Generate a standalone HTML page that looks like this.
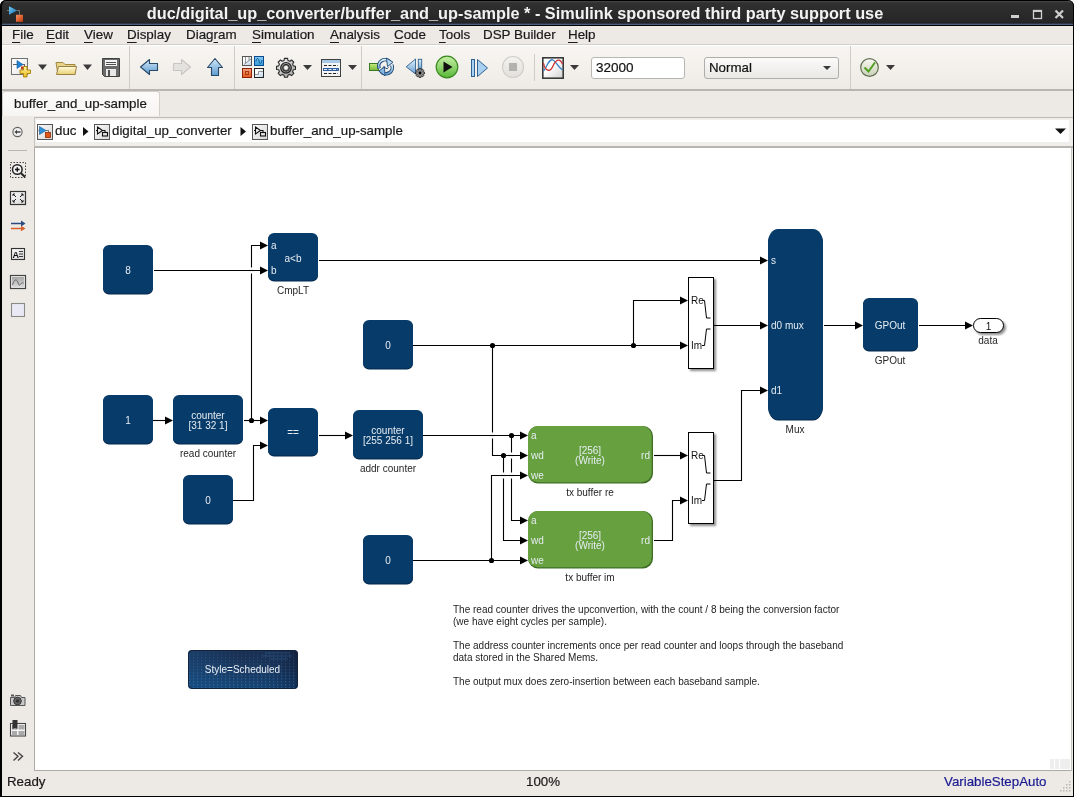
<!DOCTYPE html>
<html><head><meta charset="utf-8">
<style>
*{margin:0;padding:0;box-sizing:border-box}
html,body{width:1074px;height:797px;overflow:hidden;background:#fff;will-change:transform;font-family:"Liberation Sans",sans-serif;}
.abs{position:absolute}
#menubar span,#tab span,#status span,.ui{-webkit-text-stroke:0.2px currentColor}
#title{left:0;top:0;width:1074px;height:26px;background:linear-gradient(#000 0,#000 1px,#4a4a4a 1px,#3a3a3a 2px,#303030 3px,#262626 22px,#222 23px,#2c3644 23px,#2c3644 24px,#4a6080 24px,#4a6080 25px,#000 25px,#000 26px);border-radius:6px 6px 0 0;box-shadow:inset 2px 0 #000,inset -1px 0 #000;}
#title .t{position:absolute;left:-22px;top:4px;width:1074px;text-align:center;color:#f2f2f2;font-weight:bold;font-size:16.3px;line-height:18px;white-space:nowrap}
#menubar{left:2px;top:26px;width:1071px;height:18px;background:#edeae5;}
#menubar u{text-decoration:underline;text-underline-offset:3px;text-decoration-thickness:1px}
#menubar span{position:absolute;top:0px;font-size:13.4px;line-height:18px;color:#1a1a1a;white-space:nowrap}
#toolbar{left:2px;top:44px;width:1071px;height:47px;background:linear-gradient(#f8f6f2,#eeebe6);border-top:1px solid #d3cfc9;border-bottom:2px solid #b8b5b0;box-shadow:inset 0 1px #fff}
#tabrow{left:2px;top:91px;width:1071px;height:26px;background:#edeae5;border-bottom:1px solid #bcb9b4}
#tab{left:2px;top:91px;width:158px;height:26px;background:linear-gradient(#fcfbfa,#f7f5f2);border:1px solid #d3d0ca;border-bottom:none;border-radius:3px 3px 0 0}
#tab span{position:absolute;left:11px;top:4px;font-size:13.3px;line-height:16px;color:#1a1a1a;white-space:nowrap}
#crumbrow{left:2px;top:116px;width:1071px;height:32px;background:#edeae5}
#crumb{left:34px;top:117px;width:1039px;height:31px;background:#f0eeea;border-top:1px solid #bdbab5;border-bottom:2px solid #b8b5b0;border-left:1px solid #c6c3be}
#crumbin{left:36px;top:120px;width:1033px;height:22px;background:#fff}
#palette{left:2px;top:148px;width:32px;height:622px;background:#edeae5}
#canvas{left:34px;top:148px;width:1038px;height:623px;background:#fff;border-left:1px solid #aeaba6;border-bottom:1px solid #aeaba6;border-right:1px solid #c8c5c0}
#status{left:2px;top:771px;width:1071px;height:25px;background:#edeae5}
#status span{position:absolute;font-size:13.3px;line-height:16px;white-space:nowrap}
</style></head><body>
<div class="abs" style="left:0;top:20px;width:1074px;height:777px;background:#000"></div>
<div class="abs" style="left:2px;top:26px;width:1071px;height:770px;background:#edebe6"></div>
<div id="title" class="abs"><div class="t">duc/digital_up_converter/buffer_and_up-sample * - Simulink sponsored third party support use</div></div>
<div id="menubar" class="abs">
<span style="left:10px"><u>F</u>ile</span>
<span style="left:44px"><u>E</u>dit</span>
<span style="left:82px"><u>V</u>iew</span>
<span style="left:125px"><u>D</u>isplay</span>
<span style="left:184px">Diag<u>r</u>am</span>
<span style="left:250px"><u>S</u>imulation</span>
<span style="left:328px"><u>A</u>nalysis</span>
<span style="left:392px"><u>C</u>ode</span>
<span style="left:437px"><u>T</u>ools</span>
<span style="left:481px">DSP Builder</span>
<span style="left:566px"><u>H</u>elp</span>
</div>
<div id="toolbar" class="abs"></div>
<div id="tabrow" class="abs"></div>
<div id="tab" class="abs"><span>buffer_and_up-sample</span></div>
<div id="crumbrow" class="abs"></div>
<div id="crumb" class="abs"></div><div id="crumbin" class="abs"></div>
<div id="palette" class="abs"></div>
<div id="canvas" class="abs"></div>
<div id="status" class="abs">
<span style="left:5px;top:3px;color:#1a1a1a">Ready</span>
<span style="left:524px;top:3px;color:#1a1a1a">100%</span>
<span style="left:942px;top:3px;color:#1a1a90">VariableStepAuto</span>
</div>
<!--TOOLBAR-->
<svg class="abs" style="left:0;top:0" width="1074" height="150" viewBox="0 0 1074 150">
<defs>
<linearGradient id="gBlueArr" x1="0" y1="0" x2="0" y2="1"><stop offset="0" stop-color="#d4e8f8"/><stop offset="1" stop-color="#5c9bd0"/></linearGradient>
<linearGradient id="gFold" x1="0" y1="0" x2="0" y2="1"><stop offset="0" stop-color="#fffbe0"/><stop offset="1" stop-color="#e8d070"/></linearGradient>
<linearGradient id="gPlus" x1="0" y1="0" x2="0" y2="1"><stop offset="0" stop-color="#fff3a0"/><stop offset="1" stop-color="#e8b820"/></linearGradient>
<linearGradient id="gPlay" x1="0" y1="0" x2="0" y2="1"><stop offset="0" stop-color="#c8f0a8"/><stop offset="1" stop-color="#58b838"/></linearGradient>
<linearGradient id="gStop" x1="0" y1="0" x2="0" y2="1"><stop offset="0" stop-color="#f4f2ef"/><stop offset="1" stop-color="#e2e0dc"/></linearGradient>
<linearGradient id="gField" x1="0" y1="0" x2="0" y2="1"><stop offset="0" stop-color="#fbfbfa"/><stop offset="1" stop-color="#e9e8e5"/></linearGradient>
<linearGradient id="gCheck" x1="0" y1="0" x2="0" y2="1"><stop offset="0" stop-color="#f8f8f0"/><stop offset="1" stop-color="#c8d0b8"/></linearGradient>
<linearGradient id="gScope" x1="0" y1="0" x2="1" y2="1"><stop offset="0.4" stop-color="#fff"/><stop offset="1" stop-color="#d0d0d0"/></linearGradient>
</defs>
<!-- toolbar separators -->
<g stroke="#cfccc6" stroke-width="1">
<line x1="129.5" y1="46" x2="129.5" y2="89"/>
<line x1="234.5" y1="46" x2="234.5" y2="89"/>
<line x1="361.5" y1="46" x2="361.5" y2="89"/>
<line x1="534.5" y1="54" x2="534.5" y2="81"/>
<line x1="850.5" y1="46" x2="850.5" y2="89"/>
</g>
<!-- new model -->
<rect x="11.5" y="58.5" width="16" height="16" fill="#f0f0f0" stroke="#707070"/>
<rect x="12" y="59" width="15" height="15" fill="url(#gScope)" opacity="0.6"/>
<line x1="13" y1="64.5" x2="17" y2="64.5" stroke="#606060"/>
<path d="M17 60.5 L23 64.5 L17 68.5Z" fill="#2080d0" stroke="#1060a0" stroke-width="0.6"/>
<line x1="23" y1="64.5" x2="25" y2="64.5" stroke="#606060"/><line x1="24.5" y1="64.5" x2="24.5" y2="67" stroke="#606060"/>
<rect x="21" y="66.5" width="4" height="3" fill="#d03020"/>
<path d="M23.5 66.5h3.5v3.5h3.5v3.5h-3.5v3.5h-3.5v-3.5h-3.5v-3.5h3.5z" fill="url(#gPlus)" stroke="#b08810" stroke-width="1"/>
<path d="M38 64.5h9l-4.5 5.5z" fill="#3a3a3a"/>
<!-- folder -->
<path d="M56 62.5h7l2 2h10v10H58z" fill="#e8d488" stroke="#a08840" stroke-width="1"/>
<path d="M56.5 74.5 L58.5 66.5 H76.5 L75 74.5Z" fill="url(#gFold)" stroke="#9a8040" stroke-width="1"/>
<path d="M83 64.5h9l-4.5 5.5z" fill="#3a3a3a"/>
<!-- floppy -->
<path d="M102.5 58.5h17v18h-15l-2-2z" fill="#6a6a6a" stroke="#404040"/>
<rect x="105" y="60" width="12" height="6" fill="#f4f4f4"/>
<line x1="106" y1="62.5" x2="116" y2="62.5" stroke="#505050"/>
<line x1="106" y1="64.5" x2="116" y2="64.5" stroke="#505050"/>
<rect x="106" y="69" width="10" height="7" fill="#e8e8e8"/>
<rect x="108" y="70" width="2" height="6" fill="#505050"/>
<!-- back arrow -->
<path d="M140.5 67 L149.5 59.5 V63.5 H157.5 V70.5 H149.5 V74.5Z" fill="url(#gBlueArr)" stroke="#284868" stroke-width="1.1" stroke-linejoin="round"/>
<!-- forward arrow gray -->
<path d="M190.5 67 L181.5 59.5 V63.5 H173.5 V70.5 H181.5 V74.5Z" fill="#e4e2df" stroke="#c8c6c2" stroke-width="1.1" stroke-linejoin="round"/>
<!-- up arrow -->
<path d="M215 58.5 L222.5 67.5 H218.5 V75.5 H211.5 V67.5 H207.5Z" fill="url(#gBlueArr)" stroke="#284868" stroke-width="1.1" stroke-linejoin="round"/>
<!-- library browser -->
<defs><linearGradient id="gLbW" x1="0" y1="0" x2="1" y2="1"><stop offset="0.3" stop-color="#fff"/><stop offset="1" stop-color="#b8d0e8"/></linearGradient>
<linearGradient id="gLbB" x1="0" y1="0" x2="0" y2="1"><stop offset="0" stop-color="#8ccaf0"/><stop offset="1" stop-color="#2a9ad8"/></linearGradient>
<linearGradient id="gLbR" x1="0" y1="0" x2="0" y2="1"><stop offset="0" stop-color="#f0a080"/><stop offset="1" stop-color="#e85818"/></linearGradient></defs>
<rect x="242.5" y="56.5" width="9" height="9" fill="url(#gLbW)" stroke="#555" stroke-width="1"/>
<path d="M245.5 57 V63.5 M249 57 V60.5 M244 64.5 L251 59" stroke="#888" stroke-width="0.9" fill="none"/>
<rect x="254.5" y="56.5" width="9" height="9" fill="url(#gLbB)" stroke="#0a4a90" stroke-width="1"/>
<path d="M256 61.5 C256.5 57.5, 258.5 57.5, 259 61 C259.5 64.5, 261.5 64.5, 262 60" stroke="#0a5a98" stroke-width="1" fill="none"/>
<rect x="242.5" y="68.5" width="9" height="9" fill="url(#gLbR)" stroke="#8a2008" stroke-width="1"/>
<rect x="245.5" y="71.5" width="3" height="3" fill="none" stroke="#a83810" stroke-width="1"/>
<rect x="254.5" y="68.5" width="9" height="9" fill="url(#gLbW)" stroke="#222" stroke-width="1"/>
<path d="M255 74.5 H258.5 V71.5 H263" stroke="#888" stroke-width="0.9" fill="none"/>
<!-- gear -->
<g>
<defs><radialGradient id="gGear" cx="0.35" cy="0.3" r="0.8"><stop offset="0" stop-color="#fafafa"/><stop offset="1" stop-color="#a0a0a0"/></radialGradient></defs>
<path d="M293.34 65.85 L295.46 66.18 L295.46 69.42 L293.34 69.75 L292.57 71.61 L293.84 73.34 L291.54 75.64 L289.81 74.37 L287.95 75.14 L287.62 77.26 L284.38 77.26 L284.05 75.14 L282.19 74.37 L280.46 75.64 L278.16 73.34 L279.43 71.61 L278.66 69.75 L276.54 69.42 L276.54 66.18 L278.66 65.85 L279.43 63.99 L278.16 62.26 L280.46 59.96 L282.19 61.23 L284.05 60.46 L284.38 58.34 L287.62 58.34 L287.95 60.46 L289.81 61.23 L291.54 59.96 L293.84 62.26 L292.57 63.99Z" fill="url(#gGear)" stroke="#2a2a2a" stroke-width="1.1" stroke-linejoin="round"/>
<circle cx="286" cy="67.8" r="5.3" fill="#9a9a9a" stroke="#1e1e1e" stroke-width="1.2"/>
<circle cx="286" cy="67.8" r="3.4" fill="#777" stroke="#222" stroke-width="1"/>
<circle cx="286" cy="67.8" r="2" fill="#f6f4f0"/>
</g>
<path d="M303 65h9l-4.5 5z" fill="#3a3a3a"/>
<!-- model explorer -->
<rect x="321.5" y="59.5" width="19" height="17" fill="#f4f4f4" stroke="#404040"/>
<rect x="322" y="60" width="18" height="3" fill="#a8c8e8"/>
<g stroke="#202020" stroke-width="1"><line x1="324" y1="65.5" x2="338" y2="65.5" stroke-dasharray="3 1.5"/><line x1="324" y1="73.5" x2="338" y2="73.5" stroke-dasharray="3 1.5"/></g>
<rect x="323" y="68" width="16" height="3" fill="#3060a0"/>
<line x1="324" y1="69.5" x2="338" y2="69.5" stroke="#e0ecf8" stroke-dasharray="3 1.5"/>
<path d="M348 65h9l-4.5 5z" fill="#3a3a3a"/>
<!-- update diagram -->
<defs><linearGradient id="gGreenR" x1="0" y1="0" x2="0" y2="1"><stop offset="0" stop-color="#c8ec80"/><stop offset="1" stop-color="#78b838"/></linearGradient>
<linearGradient id="gRef" x1="0" y1="0" x2="0" y2="1"><stop offset="0" stop-color="#e0f0fc"/><stop offset="1" stop-color="#6aa0d0"/></linearGradient></defs>
<rect x="369.5" y="63.5" width="9" height="7" fill="url(#gGreenR)" stroke="#3a7a20"/>
<path d="M379.2 68.5 A6.3 6.3 0 0 1 390 62.2" stroke="#1e4a78" stroke-width="3.6" fill="none"/>
<path d="M379.2 68.5 A6.3 6.3 0 0 1 390 62.2" stroke="url(#gRef)" stroke-width="1.8" fill="none"/>
<path d="M391.8 65 A6.3 6.3 0 0 1 381 71.3" stroke="#1e4a78" stroke-width="3.6" fill="none"/>
<path d="M391.8 65 A6.3 6.3 0 0 1 381 71.3" stroke="url(#gRef)" stroke-width="1.8" fill="none"/>
<path d="M386.5 58 L393 62.3 L387.5 66.5Z" fill="#b8d8f0" stroke="#1e4a78" stroke-width="0.9" stroke-linejoin="round"/>
<path d="M385 75.8 L378.8 71 L384.5 67Z" fill="#8ab8e0" stroke="#1e4a78" stroke-width="0.9" stroke-linejoin="round"/>
<path d="M382.5 67.8 q1.5 -2.5 3 0 t3 -0.5" stroke="#1e4a78" stroke-width="1" fill="none"/>
<!-- step back -->
<path d="M406.2 66.8 L415.5 59 V74Z" fill="url(#gRef)" stroke="#306090" stroke-width="0.9" stroke-linejoin="round"/>
<rect x="418.3" y="59.3" width="3.4" height="10" fill="url(#gRef)" stroke="#306090" stroke-width="0.9"/>
<path d="M423.46 72.01 L424.53 72.18 L424.53 73.82 L423.46 73.99 L423.15 74.74 L423.78 75.62 L422.62 76.78 L421.74 76.15 L420.99 76.46 L420.82 77.53 L419.18 77.53 L419.01 76.46 L418.26 76.15 L417.38 76.78 L416.22 75.62 L416.85 74.74 L416.54 73.99 L415.47 73.82 L415.47 72.18 L416.54 72.01 L416.85 71.26 L416.22 70.38 L417.38 69.22 L418.26 69.85 L419.01 69.54 L419.18 68.47 L420.82 68.47 L420.99 69.54 L421.74 69.85 L422.62 69.22 L423.78 70.38 L423.15 71.26Z" fill="#8a8a8a" stroke="#222" stroke-width="0.9"/>
<circle cx="420" cy="73" r="1.4" fill="#000"/>
<!-- play -->
<circle cx="447" cy="67" r="10.8" fill="url(#gPlay)" stroke="#3a8a20" stroke-width="1.2"/>
<path d="M443.5 61.5 L452.5 67 L443.5 72.5Z" fill="#111"/>
<!-- step forward -->
<rect x="471.5" y="59.5" width="3" height="17" fill="#a8d0f0" stroke="#306090"/>
<path d="M477.5 59.5 L487.5 68 L477.5 76.5Z" fill="#a8d0f0" stroke="#306090" stroke-width="1"/>
<!-- stop -->
<circle cx="513" cy="67" r="10.5" fill="url(#gStop)" stroke="#d0cec9" stroke-width="1.2"/>
<rect x="509" y="63" width="8" height="8" fill="#b4b2ae"/>
<!-- scope -->
<rect x="542.8" y="57.8" width="20.4" height="20.4" fill="url(#gScope)" stroke="#3a3a3a" stroke-width="1.6"/>
<path d="M543.5 71 C547 67, 549 58, 553 60 C556 61.5, 558 67, 562.5 70" stroke="#3080c8" stroke-width="1.3" fill="none"/>
<path d="M543.5 63 C545 71, 550 73, 553 66 C556 59, 560 58, 562.5 64" stroke="#c83030" stroke-width="1.3" fill="none"/>
<path d="M570 65h9l-4.5 5z" fill="#3a3a3a"/>
<!-- stop time field -->
<rect x="591.5" y="57.5" width="93" height="21" rx="2.5" fill="#fff" stroke="#b8b6b2"/>
<!-- sim mode dropdown -->
<rect x="704.5" y="57.5" width="134" height="21" rx="2.5" fill="url(#gField)" stroke="#b0aeaa"/>
<path d="M823 66h8l-4 4z" fill="#3a3a3a"/>
<!-- check -->
<circle cx="869.5" cy="67.5" r="8.8" fill="url(#gCheck)" stroke="#607050" stroke-width="1.2"/>
<path d="M864.5 67.5 L868.5 71.5 L875 62.5" stroke="#50a020" stroke-width="2" fill="none"/>
<path d="M886 65h9l-4.5 5z" fill="#3a3a3a"/>
<!-- window buttons -->
<rect x="1011" y="15" width="8" height="3" fill="#cfcfcf"/>
<rect x="1033.5" y="10.5" width="8" height="8" fill="none" stroke="#cfcfcf" stroke-width="1.3"/>
<rect x="1033" y="10" width="9" height="2" fill="#cfcfcf"/>
<path d="M1055.5 10.5 L1063 18 M1063 10.5 L1055.5 18" stroke="#cfcfcf" stroke-width="2.2"/>
<!-- app icon -->
<defs><linearGradient id="gApT" x1="0" y1="0" x2="1" y2="1"><stop offset="0" stop-color="#70d0f8"/><stop offset="1" stop-color="#1868b0"/></linearGradient>
<linearGradient id="gApS" x1="0" y1="0" x2="1" y2="1"><stop offset="0" stop-color="#f89060"/><stop offset="1" stop-color="#c03808"/></linearGradient></defs>
<path d="M7 10.5h2 M17 10.5h2.5v4.5" stroke="#888" stroke-width="0.8" fill="none"/>
<path d="M9 6.2 L17.2 10.5 L9 14.8Z" fill="url(#gApT)"/>
<rect x="16" y="14.8" width="7" height="7" fill="url(#gApS)"/>
</svg>
<div class="abs ui" style="left:596px;top:58px;font-size:13.5px;line-height:20px;color:#111">32000</div>
<div class="abs ui" style="left:709px;top:58px;font-size:13.3px;line-height:20px;color:#111">Normal</div>
<!--/TOOLBAR-->
<!--CHROME2-->
<svg class="abs" style="left:0;top:0" width="1074" height="797" viewBox="0 0 1074 797">
<defs>
<linearGradient id="gIcon" x1="0" y1="0" x2="1" y2="1"><stop offset="0" stop-color="#fafafa"/><stop offset="1" stop-color="#d8d8d8"/></linearGradient>
<linearGradient id="gImg" x1="0" y1="0" x2="0" y2="1"><stop offset="0" stop-color="#a8a8a8"/><stop offset="1" stop-color="#d8d8d8"/></linearGradient>
</defs>
<!-- breadcrumb back icon -->
<circle cx="17.5" cy="132" r="4.6" fill="#f0f0f0" stroke="#606060" stroke-width="1.1"/>
<path d="M14.5 132 L17 129.8 V131.2 H20.5 V132.8 H17 V134.2Z" fill="#404040"/>
<!-- crumb icons -->
<rect x="37.5" y="124.5" width="15" height="15" fill="url(#gIcon)" stroke="#555"/>
<path d="M39.5 126.5 L46 130.5 L39.5 134.5Z" fill="#2a90d8" stroke="#1a5a98" stroke-width="0.6"/>
<path d="M38.5 130.5h1 M46 130.5h2.5v2" stroke="#555" stroke-width="0.8" fill="none"/>
<rect x="45.5" y="132.5" width="5" height="5" fill="#e05418" stroke="#902a08" stroke-width="0.8"/>
<path d="M83 127 L88.5 131.5 L83 136Z" fill="#111"/>
<rect x="94.5" y="124.5" width="15" height="15" fill="url(#gIcon)" stroke="#555"/>
<path d="M97.5 127 L102.5 130.5 L97.5 134Z M96 130.5h1.5 M102.5 130.5h2.5v2" stroke="#111" stroke-width="1.1" fill="none"/>
<rect x="102.5" y="132.5" width="5" height="3.5" fill="none" stroke="#111" stroke-width="1.1"/>
<path d="M240.5 127 L246 131.5 L240.5 136Z" fill="#111"/>
<rect x="252.5" y="124.5" width="15" height="15" fill="url(#gIcon)" stroke="#555"/>
<path d="M255.5 127 L260.5 130.5 L255.5 134Z M254 130.5h1.5 M260.5 130.5h2.5v2" stroke="#111" stroke-width="1.1" fill="none"/>
<rect x="260.5" y="132.5" width="5" height="3.5" fill="none" stroke="#111" stroke-width="1.1"/>
<path d="M1055 128.5h11l-5.5 5.5z" fill="#111"/>
<!-- palette -->
<line x1="8" y1="150.5" x2="27" y2="150.5" stroke="#b8b6b2"/>
<rect x="10.5" y="162.5" width="15" height="15" fill="none" stroke="#444" stroke-dasharray="1.5 1.5"/>
<circle cx="17.3" cy="169.5" r="4.8" fill="#f4f4f4" stroke="#222" stroke-width="1.5"/>
<path d="M15 169.5h4.6 M17.3 167.2v4.6" stroke="#111" stroke-width="1.4"/>
<path d="M20.8 173 L25 177" stroke="#222" stroke-width="2"/>
<rect x="10.5" y="191.5" width="15" height="13" fill="url(#gIcon)" stroke="#333" stroke-width="1.2"/>
<path d="M13 194 l3 3 M13 194h2 M13 194v2 M23 194 l-3 3 M23 194h-2 M23 194v2 M13 202 l3 -3 M13 202h2 M13 202v-2 M23 202 l-3 -3 M23 202h-2 M23 202v-2" stroke="#222" stroke-width="1" fill="none"/>
<path d="M11 223.5h11" stroke="#2a4a80" stroke-width="1.5"/><path d="M21 220.5 L25.5 223.5 L21 226.5Z" fill="#2a4a80"/>
<path d="M11 228.5h11" stroke="#d8602a" stroke-width="1.5"/><path d="M21 225.8 L25.5 228.5 L21 231.2Z" fill="#d8602a"/>
<rect x="11.5" y="248.5" width="13" height="11" fill="url(#gIcon)" stroke="#333" stroke-width="1.1"/>
<text x="12.5" y="257.8" font-family="Liberation Sans" font-weight="bold" font-size="9" fill="#111">A</text>
<path d="M19 251.5h4 M19 254h4 M19 256.5h4" stroke="#222" stroke-width="0.9"/>
<rect x="10.5" y="275.5" width="15" height="13" fill="#f0f0f0" stroke="#444" stroke-width="1.2"/>
<rect x="12" y="277" width="12" height="10" fill="url(#gImg)"/>
<path d="M12.5 285 C14 279, 17 278, 18.5 284 C19.5 287, 21 282, 23.5 283" stroke="#666" stroke-width="1" fill="none"/>
<rect x="11.5" y="303.5" width="13" height="13" fill="#e9e8f5" stroke="#8a8a8a" stroke-width="1.1"/>
<!-- camera -->
<path d="M10.5 697.5h4l1-2h5l1 2h3.5v8h-14.5z" fill="#c8c8c8" stroke="#555" stroke-width="1"/>
<rect x="11" y="694.5" width="3" height="2" fill="#555"/>
<circle cx="17.5" cy="701" r="3.8" fill="#666" stroke="#333" stroke-width="1"/>
<circle cx="17.5" cy="701" r="1.8" fill="#333"/>
<!-- report -->
<rect x="10.5" y="723.5" width="15" height="12.5" fill="#f4f4f4" stroke="#444" stroke-width="1.1"/>
<rect x="12" y="725" width="5" height="4.5" fill="#999"/><rect x="18.5" y="725" width="6" height="4.5" fill="#aaa"/>
<rect x="12" y="731" width="5" height="4" fill="#aaa"/><rect x="18.5" y="731" width="6" height="4" fill="#aaa"/>
<path d="M12.5 720 h5 v9 q-2.5 -2 -5 0z" fill="#333"/>
<!-- >> -->
<path d="M13.5 752.5 L18 756.3 L13.5 760.5 M18 752.5 L22.5 756.3 L18 760.5" stroke="#444" stroke-width="1.4" fill="none"/>
<!-- status resize grip -->
<g><rect x="1069" y="781" width="1.5" height="1.5" fill="#b9b6b1"/><rect x="1069" y="784" width="1.5" height="1.5" fill="#b9b6b1"/><rect x="1066" y="784" width="1.5" height="1.5" fill="#b9b6b1"/><rect x="1069" y="787" width="1.5" height="1.5" fill="#b9b6b1"/><rect x="1066" y="787" width="1.5" height="1.5" fill="#b9b6b1"/><rect x="1063" y="787" width="1.5" height="1.5" fill="#b9b6b1"/><rect x="1069" y="790" width="1.5" height="1.5" fill="#b9b6b1"/><rect x="1066" y="790" width="1.5" height="1.5" fill="#b9b6b1"/><rect x="1063" y="790" width="1.5" height="1.5" fill="#b9b6b1"/><rect x="1060" y="790" width="1.5" height="1.5" fill="#b9b6b1"/></g>
<g fill="#eeeeee"><rect x="1050" y="759" width="4" height="10"/><rect x="1055" y="759" width="4" height="10"/><rect x="1060" y="759" width="10" height="10"/></g>
</svg>
<div class="abs ui" style="left:55px;top:123px;font-size:13.3px;line-height:16px;color:#1a1a1a">duc</div>
<div class="abs ui" style="left:112px;top:123px;font-size:13.3px;line-height:16px;color:#1a1a1a">digital_up_converter</div>
<div class="abs ui" style="left:270px;top:123px;font-size:13.3px;line-height:16px;color:#1a1a1a">buffer_and_up-sample</div>
<!--/CHROME2-->

<!--DIAGRAM-->
<svg class="abs" style="left:0;top:0" width="1074" height="797" viewBox="0 0 1074 797" font-family="Liberation Sans" font-size="10">
<defs><filter id="sh" x="-30%" y="-10%" width="160%" height="130%"><feGaussianBlur in="SourceAlpha" stdDeviation="1.2"/><feOffset dx="2" dy="2"/><feComponentTransfer><feFuncA type="linear" slope="0.45"/></feComponentTransfer><feMerge><feMergeNode/><feMergeNode in="SourceGraphic"/></feMerge></filter></defs>
<g fill="none" stroke="#000" stroke-width="1.1"><path d="M154 270.5 H262"/><path d="M244 420.5 H262"/><path d="M251.5 420.5 V245.5 H262"/><path d="M153 420.5 H167"/><path d="M233 500.5 H253.5 V445.5 H262"/><path d="M319 435.5 H347"/><path d="M319 260.5 H762"/><path d="M413 345.5 H682"/><path d="M633.5 345.5 V300.5 H682"/><path d="M492.5 345.5 V455.5 H521"/><path d="M423 435.5 H521"/><path d="M511.5 435.5 V520.5 H521"/><path d="M503.5 455.5 V540.5 H521"/><path d="M413 560.5 H521"/><path d="M491.5 560.5 V475.5 H521"/><path d="M654 455.5 H682"/><path d="M654 540.5 H672.5 V500.5 H682"/><path d="M714 480.5 H741.5 V390.5 H762"/><path d="M714 325.5 H762"/><path d="M824 325.5 H857"/><path d="M919 325.5 H967"/></g>
<g fill="#fff"><rect x="250.0" y="267.5" width="3" height="6"/><rect x="491.0" y="432.5" width="3" height="6"/><rect x="510.0" y="452.5" width="3" height="6"/><rect x="510.0" y="472.5" width="3" height="6"/><rect x="502.0" y="472.5" width="3" height="6"/></g>
<g fill="none" stroke="#000" stroke-width="1.1"><path d="M248.5 270.5 H254.5"/><path d="M489.5 435.5 H495.5"/><path d="M508.5 455.5 H514.5"/><path d="M508.5 475.5 H514.5"/><path d="M500.5 475.5 H506.5"/></g>
<g fill="#000"><path d="M260 241.5 L268 245.5 L260 249.5Z"/><path d="M260 266.5 L268 270.5 L260 274.5Z"/><path d="M260 416.5 L268 420.5 L260 424.5Z"/><path d="M260 441.5 L268 445.5 L260 449.5Z"/><path d="M165 416.5 L173 420.5 L165 424.5Z"/><path d="M345 431.5 L353 435.5 L345 439.5Z"/><path d="M760 256.5 L768 260.5 L760 264.5Z"/><path d="M680 296.5 L688 300.5 L680 304.5Z"/><path d="M680 341.5 L688 345.5 L680 349.5Z"/><path d="M520 431.5 L528 435.5 L520 439.5Z"/><path d="M520 451.5 L528 455.5 L520 459.5Z"/><path d="M520 471.5 L528 475.5 L520 479.5Z"/><path d="M520 516.5 L528 520.5 L520 524.5Z"/><path d="M520 536.5 L528 540.5 L520 544.5Z"/><path d="M520 556.5 L528 560.5 L520 564.5Z"/><path d="M680 451.5 L688 455.5 L680 459.5Z"/><path d="M680 496.5 L688 500.5 L680 504.5Z"/><path d="M760 386.5 L768 390.5 L760 394.5Z"/><path d="M760 321.5 L768 325.5 L760 329.5Z"/><path d="M855 321.5 L863 325.5 L855 329.5Z"/><path d="M965 321.5 L973 325.5 L965 329.5Z"/></g>
<g fill="#000"><circle cx="251.5" cy="420.5" r="2.6"/><circle cx="492.5" cy="345.5" r="2.6"/><circle cx="633.5" cy="345.5" r="2.6"/><circle cx="511.5" cy="435.5" r="2.6"/><circle cx="503.5" cy="455.5" r="2.6"/><circle cx="491.5" cy="560.5" r="2.6"/></g>
<rect x="103" y="246" width="50" height="48.5" rx="6" ry="6" fill="#05264a"/>
<rect x="103" y="245" width="50" height="48.5" rx="6" ry="6" fill="#073b69"/>
<text x="128" y="274" text-anchor="middle" fill="#e6ecf2">8</text>
<rect x="268" y="234" width="50" height="47.5" rx="6" ry="6" fill="#05264a"/>
<rect x="268" y="233" width="50" height="47.5" rx="6" ry="6" fill="#073b69"/>
<text x="293" y="262" text-anchor="middle" fill="#e6ecf2">a&lt;b</text>
<text x="271" y="249" text-anchor="start" fill="#e6ecf2">a</text>
<text x="271" y="274" text-anchor="start" fill="#e6ecf2">b</text>
<text x="293" y="294" text-anchor="middle" fill="#262626">CmpLT</text>
<rect x="103" y="396" width="50" height="48.5" rx="6" ry="6" fill="#05264a"/>
<rect x="103" y="395" width="50" height="48.5" rx="6" ry="6" fill="#073b69"/>
<text x="128" y="424" text-anchor="middle" fill="#e6ecf2">1</text>
<rect x="173" y="396" width="70" height="48.5" rx="6" ry="6" fill="#05264a"/>
<rect x="173" y="395" width="70" height="48.5" rx="6" ry="6" fill="#073b69"/>
<text x="208" y="418.5" text-anchor="middle" fill="#e6ecf2">counter</text>
<text x="208" y="429" text-anchor="middle" fill="#e6ecf2">[31 32 1]</text>
<text x="208" y="456.5" text-anchor="middle" fill="#262626">read counter</text>
<rect x="183" y="476" width="50" height="48.5" rx="6" ry="6" fill="#05264a"/>
<rect x="183" y="475" width="50" height="48.5" rx="6" ry="6" fill="#073b69"/>
<text x="208" y="504" text-anchor="middle" fill="#e6ecf2">0</text>
<rect x="268" y="409" width="50" height="47.5" rx="6" ry="6" fill="#05264a"/>
<rect x="268" y="408" width="50" height="47.5" rx="6" ry="6" fill="#073b69"/>
<text x="293" y="436" text-anchor="middle" fill="#e6ecf2">==</text>
<rect x="363" y="321" width="50" height="48.5" rx="6" ry="6" fill="#05264a"/>
<rect x="363" y="320" width="50" height="48.5" rx="6" ry="6" fill="#073b69"/>
<text x="388" y="349" text-anchor="middle" fill="#e6ecf2">0</text>
<rect x="353" y="411" width="70" height="48.5" rx="6" ry="6" fill="#05264a"/>
<rect x="353" y="410" width="70" height="48.5" rx="6" ry="6" fill="#073b69"/>
<text x="388" y="433.5" text-anchor="middle" fill="#e6ecf2">counter</text>
<text x="388" y="444" text-anchor="middle" fill="#e6ecf2">[255 256 1]</text>
<text x="388" y="471.5" text-anchor="middle" fill="#262626">addr counter</text>
<rect x="363" y="536" width="50" height="48.5" rx="6" ry="6" fill="#05264a"/>
<rect x="363" y="535" width="50" height="48.5" rx="6" ry="6" fill="#073b69"/>
<text x="388" y="564" text-anchor="middle" fill="#e6ecf2">0</text>
<rect x="528" y="426" width="125" height="57.5" rx="10" ry="10" fill="#3f6f27"/>
<rect x="528" y="426" width="123.7" height="56.2" rx="10" ry="10" fill="#67a13f"/>
<text x="590" y="454" text-anchor="middle" fill="#e6ecf2">[256]</text>
<text x="590" y="463.5" text-anchor="middle" fill="#e6ecf2">(Write)</text>
<text x="531" y="439" text-anchor="start" fill="#e6ecf2">a</text>
<text x="531" y="459" text-anchor="start" fill="#e6ecf2">wd</text>
<text x="531" y="479" text-anchor="start" fill="#e6ecf2">we</text>
<text x="650" y="459" text-anchor="end" fill="#e6ecf2">rd</text>
<text x="590" y="495.5" text-anchor="middle" fill="#262626">tx buffer re</text>
<rect x="528" y="511" width="125" height="57.5" rx="10" ry="10" fill="#3f6f27"/>
<rect x="528" y="511" width="123.7" height="56.2" rx="10" ry="10" fill="#67a13f"/>
<text x="590" y="539" text-anchor="middle" fill="#e6ecf2">[256]</text>
<text x="590" y="548.5" text-anchor="middle" fill="#e6ecf2">(Write)</text>
<text x="531" y="524" text-anchor="start" fill="#e6ecf2">a</text>
<text x="531" y="544" text-anchor="start" fill="#e6ecf2">wd</text>
<text x="531" y="564" text-anchor="start" fill="#e6ecf2">we</text>
<text x="650" y="544" text-anchor="end" fill="#e6ecf2">rd</text>
<text x="590" y="580.5" text-anchor="middle" fill="#262626">tx buffer im</text>
<rect x="688.5" y="277.5" width="25" height="91" fill="#fff" stroke="#000" stroke-width="1" filter="url(#sh)"/>
<text x="691" y="304" text-anchor="start" fill="#111">Re</text>
<text x="691" y="349" text-anchor="start" fill="#111">Im</text>
<path d="M702.5 300.5 H704.5 L706.5 318 H710.5 M702 345.5 H704.5 L706.5 329 H710.5" stroke="#000" stroke-width="1" fill="none"/>
<rect x="688.5" y="432.5" width="25" height="91" fill="#fff" stroke="#000" stroke-width="1" filter="url(#sh)"/>
<text x="691" y="459" text-anchor="start" fill="#111">Re</text>
<text x="691" y="504" text-anchor="start" fill="#111">Im</text>
<path d="M702.5 455.5 H704.5 L706.5 473 H710.5 M702 500.5 H704.5 L706.5 484 H710.5" stroke="#000" stroke-width="1" fill="none"/>
<rect x="768" y="230" width="55" height="190.5" rx="10" ry="14" fill="#05264a"/>
<rect x="768" y="229" width="55" height="190.5" rx="10" ry="14" fill="#073b69"/>
<text x="771" y="264" text-anchor="start" fill="#e6ecf2">s</text>
<text x="771" y="329" text-anchor="start" fill="#e6ecf2">d0 mux</text>
<text x="771" y="394" text-anchor="start" fill="#e6ecf2">d1</text>
<text x="795" y="433" text-anchor="middle" fill="#262626">Mux</text>
<rect x="863" y="299" width="55" height="52.5" rx="6" ry="6" fill="#05264a"/>
<rect x="863" y="298" width="55" height="52.5" rx="6" ry="6" fill="#073b69"/>
<text x="890" y="329" text-anchor="middle" fill="#e6ecf2">GPOut</text>
<text x="890" y="364" text-anchor="middle" fill="#262626">GPOut</text>
<rect x="973.5" y="318.5" width="30" height="14" rx="7" ry="7" fill="#fff" stroke="#000" stroke-width="1" filter="url(#sh)"/>
<text x="988.5" y="329.5" text-anchor="middle" fill="#111">1</text>
<text x="988" y="343.5" text-anchor="middle" fill="#262626">data</text>
<defs><linearGradient id="gsty" x1="0" y1="0" x2="0" y2="1"><stop offset="0" stop-color="#1a2642"/><stop offset="0.5" stop-color="#1b3152"/><stop offset="1" stop-color="#17416d"/></linearGradient><linearGradient id="gsty2" x1="0" y1="0" x2="1" y2="0"><stop offset="0" stop-color="#1a70b8" stop-opacity="0.3"/><stop offset="0.5" stop-color="#1a70b8" stop-opacity="0.1"/><stop offset="1" stop-color="#0a1530" stop-opacity="0.35"/></linearGradient><pattern id="psty" width="4" height="3" patternUnits="userSpaceOnUse"><rect x="1" y="0" width="1.2" height="1.5" fill="#3a90e0" opacity="0.45"/></pattern><linearGradient id="gmask" x1="0" y1="0" x2="0" y2="1"><stop offset="0" stop-color="#fff" stop-opacity="0.3"/><stop offset="1" stop-color="#fff" stop-opacity="1"/></linearGradient><mask id="msty"><rect x="188" y="650" width="110" height="39" fill="url(#gmask)"/></mask></defs>
<rect x="188" y="650" width="110" height="39" rx="4" fill="url(#gsty)"/>
<rect x="188" y="650" width="110" height="39" rx="4" fill="url(#gsty2)"/>
<rect x="188" y="650" width="110" height="39" rx="4" fill="url(#psty)" mask="url(#msty)"/>
<path d="M265 653 h25 M262 656 h30 M270 659 h18" stroke="#3a6a9a" stroke-width="1.2" opacity="0.5"/>
<rect x="188.5" y="650.5" width="109" height="38" rx="4" fill="none" stroke="#13223c" stroke-width="1"/>
<text x="242.5" y="673" text-anchor="middle" fill="#e8eef6">Style=Scheduled</text>
<text x="453" y="612.7" text-anchor="start" fill="#1e1e1e">The read counter drives the upconvertion, with the count / 8 being the conversion factor</text>
<text x="453" y="624.6" text-anchor="start" fill="#1e1e1e">(we have eight cycles per sample).</text>
<text x="453" y="648.7" text-anchor="start" fill="#1e1e1e">The address counter increments once per read counter and loops through the baseband</text>
<text x="453" y="660.6" text-anchor="start" fill="#1e1e1e">data stored in the Shared Mems.</text>
<text x="453" y="684.7" text-anchor="start" fill="#1e1e1e">The output mux does zero-insertion between each baseband sample.</text>
</svg>
<!--/DIAGRAM-->
</body></html>
